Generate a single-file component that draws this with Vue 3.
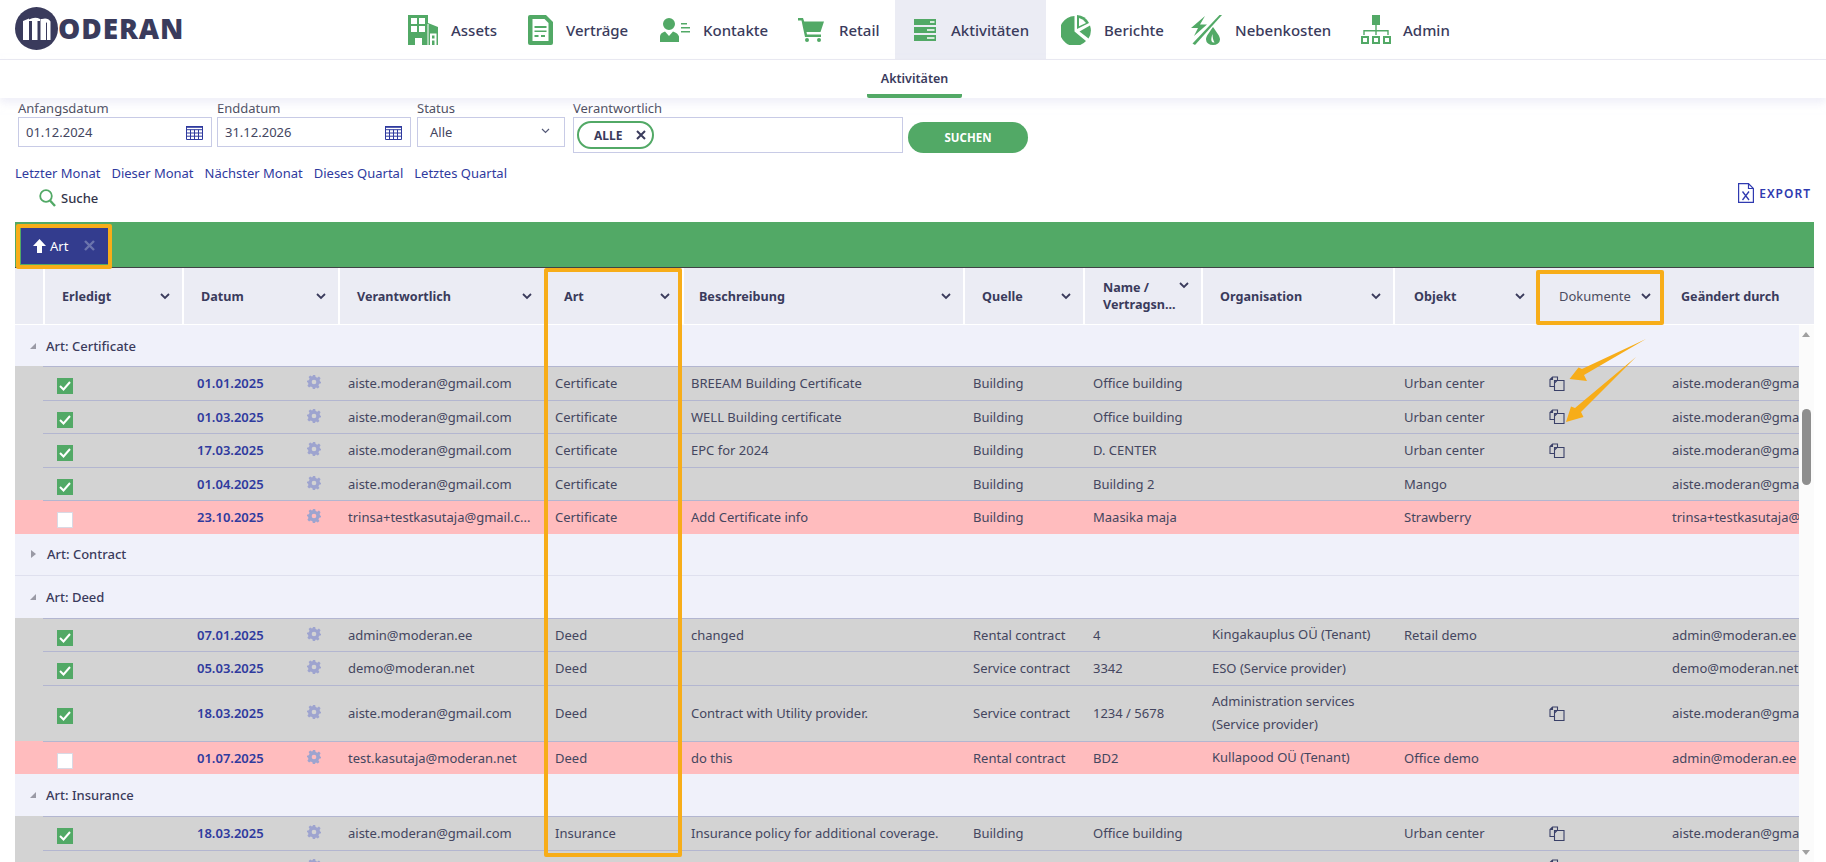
<script setup>
const g = '#52a966'
const w = '#ffffff'
const nav = [
  { label: 'Assets', vw: 30, vh: 30, shapes: [
    [g, 'M0 0H20V8L30 12V30H0Z'],
    [w, 'M3 3H9V9H3ZM11 3H17V9H11ZM3 11H9V17H3ZM11 11H17V17H11ZM7 23H14V30H7ZM19.5 9H20.5V30H19.5Z'],
    [w, 'M22 30V18.5H28.5V30H26.5V25.5H24V30ZM24 20.5V23.5H26.5V20.5Z'] ] },
  { label: 'Verträge', vw: 25, vh: 30, shapes: [
    [g, 'M2 0H18L25 7V28A2 2 0 0 1 23 30H2A2 2 0 0 1 0 28V2A2 2 0 0 1 2 0Z'],
    [w, 'M4.5 4H16.5L20.5 8V26H4.5Z'],
    [g, 'M6.5 11H18.5V13H6.5ZM6.5 15.5H18.5V17H6.5ZM6.5 20H10.5V22H6.5ZM13 20H17V22H13Z'] ] },
  { label: 'Kontakte', vw: 30, vh: 24, shapes: [
    [g, 'M9 0A6 6 0 1 1 9 12A6 6 0 1 1 9 0ZM0 24V18.5Q0 15 5 13.5L9 18L13 13.5Q18 15 19 18.5V24Z'],
    [g, 'M21 5H27V6.6H21ZM21 9H30V10.6H21ZM21 13H30V14.6H21Z'] ] },
  { label: 'Retail', vw: 26, vh: 24, shapes: [
    [g, 'M0 0H5L6.2 3.5H26L22.5 14H8.5L9 16.5H23V19H7L3.5 2.5H0Z'],
    [g, 'M9 20A2 2 0 1 1 9 24A2 2 0 1 1 9 20ZM21 20A2 2 0 1 1 21 24A2 2 0 1 1 21 20Z'] ] },
  { label: 'Aktivitäten', active: true, vw: 22, vh: 22, shapes: [
    [g, 'M0 0H22V6H0ZM0 8H22V14H0ZM0 16H22V22H0Z'],
    [w, 'M16 2.2H20.5V3.8H16ZM13 10.2H20.5V11.8H13ZM13 18.2H20.5V19.8H13Z'] ] },
  { label: 'Berichte', vw: 30, vh: 30, shapes: [
    [g, 'M13.5 1V16.5L25 26A15 15 0 1 1 13.5 1Z'],
    [g, 'M16 0A15 15 0 0 1 28 8L16 14Z'],
    [w, 'M18 3A12 12 0 0 1 25 8L18 11.3Z'],
    [g, 'M29 10.5A15 15 0 0 1 27.5 23.5L18.5 16.5Z'] ] },
  { label: 'Nebenkosten', vw: 31, vh: 30, shapes: [
    [g, 'M1.5 28.5L28.5 0H31L4 30Z'],
    [g, 'M14 1L0 13H7L3 21L16 9.5H9Z'],
    [g, 'M22 12C26 18 29 21 29 24.5A7 5.5 0 0 1 15 24.5C15 21 18 18 22 12Z'],
    [w, 'M21.5 19C20.5 22 20 24 20.5 26Q21.5 28 23.5 27.5C22 25 21.5 22 21.5 19Z'] ] },
  { label: 'Admin', vw: 30, vh: 29, shapes: [
    [g, 'M11 0H19V10H11ZM14.3 10H15.7V15H27.7V20H26.3V16.5H15.7V20H14.3V16.5H3.7V20H2.3V15H14.3Z'],
    [g, 'M0 21H8V29H0ZM11 21H19V29H11ZM22 21H30V29H22Z'],
    [w, 'M2 23H6V27H2ZM13 23H17V27H13ZM24 23H28V27H24Z'] ] }
]

const links = ['Letzter Monat', 'Dieser Monat', 'Nächster Monat', 'Dieses Quartal', 'Letztes Quartal']

const heads = [
  { label: '', blank: true },
  { label: 'Erledigt' },
  { label: 'Datum' },
  { label: 'Verantwortlich' },
  { label: 'Art' },
  { label: 'Beschreibung' },
  { label: 'Quelle' },
  { label: 'Name / Vertragsn...', two: true },
  { label: 'Organisation' },
  { label: 'Objekt' },
  { label: 'Dokumente', plain: true },
  { label: 'Geändert durch', nochev: true }
]

const A = 'aiste.moderan@gmail.com'
const T = 'trinsa+testkasutaja@gmail.c...'
const rows = [
  { group: 'Art: Certificate', open: true, first: true },
  { done: 1, date: '01.01.2025', who: A, art: 'Certificate', desc: 'BREEAM Building Certificate', src: 'Building', name: 'Office building', org: '', obj: 'Urban center', doc: 1, by: A },
  { done: 1, date: '01.03.2025', who: A, art: 'Certificate', desc: 'WELL Building certificate', src: 'Building', name: 'Office building', org: '', obj: 'Urban center', doc: 1, by: A },
  { done: 1, date: '17.03.2025', who: A, art: 'Certificate', desc: 'EPC for 2024', src: 'Building', name: 'D. CENTER', org: '', obj: 'Urban center', doc: 1, by: A },
  { done: 1, date: '01.04.2025', who: A, art: 'Certificate', desc: '', src: 'Building', name: 'Building 2', org: '', obj: 'Mango', doc: 0, by: A },
  { done: 0, date: '23.10.2025', who: T, art: 'Certificate', desc: 'Add Certificate info', src: 'Building', name: 'Maasika maja', org: '', obj: 'Strawberry', doc: 0, by: 'trinsa+testkasutaja@gmail.com' },
  { group: 'Art: Contract', open: false },
  { group: 'Art: Deed', open: true },
  { done: 1, date: '07.01.2025', who: 'admin@moderan.ee', art: 'Deed', desc: 'changed', src: 'Rental contract', name: '4', org: 'Kingakauplus OÜ (Tenant)', obj: 'Retail demo', doc: 0, by: 'admin@moderan.ee' },
  { done: 1, date: '05.03.2025', who: 'demo@moderan.net', art: 'Deed', desc: '', src: 'Service contract', name: '3342', org: 'ESO (Service provider)', obj: '', doc: 0, by: 'demo@moderan.net' },
  { done: 1, tall: true, date: '18.03.2025', who: A, art: 'Deed', desc: 'Contract with Utility provider.', src: 'Service contract', name: '1234 / 5678', org: 'Administration services (Service provider)', obj: '', doc: 1, by: A },
  { done: 0, date: '01.07.2025', who: 'test.kasutaja@moderan.net', art: 'Deed', desc: 'do this', src: 'Rental contract', name: 'BD2', org: 'Kullapood OÜ (Tenant)', obj: 'Office demo', doc: 0, by: 'admin@moderan.ee' },
  { group: 'Art: Insurance', open: true },
  { done: 1, date: '18.03.2025', who: A, art: 'Insurance', desc: 'Insurance policy for additional coverage.', src: 'Building', name: 'Office building', org: '', obj: 'Urban center', doc: 1, by: A },
  { done: 1, date: '19.03.2025', who: A, art: 'Insurance', desc: 'Insurance 2024 fully', src: 'Building', name: 'D. CENTER', org: '', obj: 'Urban center', doc: 1, by: A }
]
</script>

<template>
  <div class="page">
    <header class="topbar">
      <div class="logo">
        <svg class="logo-mark" viewBox="0 0 43 43" width="43" height="43" aria-hidden="true">
          <circle cx="21.5" cy="21.5" r="21.5" fill="#3a3b5c" />
          <path d="M8 14L14 11.5V33H8Z M17 12H22.5V33H17Z M25.5 12H31V33H25.5Z M14 12.5Q20 9.5 25 12L25 14H14Z M27 12Q33 10.5 35.5 14.5V33H32V16Z" fill="#ffffff" />
        </svg>
        <span class="logo-text">ODERAN</span>
      </div>
      <nav class="nav">
        <a v-for="item in nav" :key="item.label" class="nav-item" :class="{ active: item.active }">
          <svg :width="item.vw" :height="item.vh" :viewBox="`0 0 ${item.vw} ${item.vh}`" aria-hidden="true">
            <path v-for="(s, i) in item.shapes" :key="i" :d="s[1]" :fill="s[0]" fill-rule="evenodd" />
          </svg>
          <span>{{ item.label }}</span>
        </a>
      </nav>
    </header>

    <div class="subnav"><span class="subtab">Aktivitäten</span></div>

    <section class="filters">
      <label class="field f-date">
        <span class="lbl">Anfangsdatum</span>
        <span class="box">01.12.2024
          <svg class="cal" width="17" height="14" viewBox="0 0 17 14" aria-hidden="true"><path d="M.5.5H16.5V13.5H.5ZM.5 3.7H16.5M.5 7H16.5M.5 10.2H16.5M4.5 3.7V13.5M8.5 3.7V13.5M12.5 3.7V13.5" fill="none" stroke="#2f3a9e" /><path d="M0 0H17V1.8H0Z" fill="#2f3a9e" /></svg>
        </span>
      </label>
      <label class="field f-date">
        <span class="lbl">Enddatum</span>
        <span class="box">31.12.2026
          <svg class="cal" width="17" height="14" viewBox="0 0 17 14" aria-hidden="true"><path d="M.5.5H16.5V13.5H.5ZM.5 3.7H16.5M.5 7H16.5M.5 10.2H16.5M4.5 3.7V13.5M8.5 3.7V13.5M12.5 3.7V13.5" fill="none" stroke="#2f3a9e" /><path d="M0 0H17V1.8H0Z" fill="#2f3a9e" /></svg>
        </span>
      </label>
      <label class="field f-status">
        <span class="lbl">Status</span>
        <span class="box box-sel">Alle
          <svg class="sel-chev" width="9" height="6" viewBox="0 0 9 6" aria-hidden="true"><path d="M1 1L4.5 4.5L8 1" fill="none" stroke="#555a78" stroke-width="1.2" /></svg>
        </span>
      </label>
      <label class="field f-who">
        <span class="lbl">Verantwortlich</span>
        <span class="box box-who">
          <span class="chip">ALLE
            <svg width="10" height="10" viewBox="0 0 10 10" aria-hidden="true"><path d="M1 1L9 9M9 1L1 9" stroke="#3a3b5c" stroke-width="2" /></svg>
          </span>
        </span>
      </label>
      <button class="search-btn">SUCHEN</button>
    </section>

    <div class="quick">
      <a v-for="l in links" :key="l">{{ l }}</a>
    </div>

    <div class="tools">
      <span class="suche">
        <svg width="17" height="18" viewBox="0 0 17 18" aria-hidden="true"><circle cx="7" cy="7" r="5.8" fill="none" stroke="#52a966" stroke-width="1.8" /><path d="M11 11.5L16 17" stroke="#52a966" stroke-width="2.4" /></svg>
        Suche
      </span>
      <span class="export">
        <svg width="16" height="20" viewBox="0 0 16 20" aria-hidden="true"><path d="M.6.6H10.5L15.4 5.5V19.4H.6ZM10.5.6V5.5H15.4" fill="none" stroke="#2f3ab0" stroke-width="1.2" /><path d="M4.5 8.5L11 17M11 8.5L4.5 17" stroke="#2f3ab0" stroke-width="1.3" /></svg>
        EXPORT
      </span>
    </div>

    <section class="table">
      <div class="groupbar">
        <div class="group-chip">
          <svg width="13" height="14" viewBox="0 0 13 14" aria-hidden="true"><path d="M6.5 0L13 7H9V14H4V7H0Z" fill="#fff" /></svg>
          <span>Art</span>
          <svg class="chip-x" width="11" height="11" viewBox="0 0 11 11" aria-hidden="true"><path d="M1 1L10 10M10 1L1 10" stroke="#6b74ad" stroke-width="2.4" /></svg>
        </div>
      </div>

      <div class="thead">
        <div v-for="h in heads" :key="h.label" class="th" :class="{ blank: h.blank, plain: h.plain, two: h.two }">
          <span class="th-label">{{ h.label }}</span>
          <svg v-if="!h.blank && !h.nochev" class="chev" width="10" height="7" viewBox="0 0 10 7" aria-hidden="true"><path d="M1 1L5 5L9 1" fill="none" stroke="#3a3b5c" stroke-width="1.8" /></svg>
        </div>
      </div>

      <div class="tbody-wrap">
        <div class="tbody">
          <template v-for="(r, i) in rows" :key="i">
            <div v-if="r.group" class="group-row" :class="{ first: r.first, closed: !r.open }">
              <span class="tri" :class="r.open ? 'tri-open' : 'tri-closed'"></span>
              <span>{{ r.group }}</span>
            </div>
            <div v-else class="row" :class="{ late: !r.done, tall: r.tall }">
              <div class="td td-spacer"></div>
              <div class="td td-check">
                <span class="check" :class="{ on: r.done }">
                  <svg v-if="r.done" width="12" height="10" viewBox="0 0 12 10" aria-hidden="true"><path d="M1 5L4.5 8.5L11 1" fill="none" stroke="#fff" stroke-width="2" /></svg>
                </span>
              </div>
              <div class="td td-date">
                <span class="date">{{ r.date }}</span>
                <svg class="gear" width="14" height="14" viewBox="0 0 24 24" aria-hidden="true"><path d="M10 0H14L14.8 3.4L17.6 4.5L20.5 2.7L23.3 5.5L21.5 8.4L22.6 11.2L24 12V14L21 14.8L19.6 17.6L21.3 20.5L18.5 23.3L15.6 21.5L14 22.4V24H10L9.2 21L6.4 19.6L3.5 21.3L.7 18.5L2.5 15.6L1.4 12.8L0 12V10L3 9.2L4.4 6.4L2.7 3.5L5.5.7L8.4 2.5L10 1.6ZM12 8A4 4 0 1 0 12 16A4 4 0 1 0 12 8Z" fill="#9ea4cf" fill-rule="evenodd" /></svg>
              </div>
              <div class="td">{{ r.who }}</div>
              <div class="td">{{ r.art }}</div>
              <div class="td">{{ r.desc }}</div>
              <div class="td">{{ r.src }}</div>
              <div class="td">{{ r.name }}</div>
              <div class="td td-wrap">{{ r.org }}</div>
              <div class="td">{{ r.obj }}</div>
              <div class="td td-doc">
                <svg v-if="r.doc" width="16" height="15" viewBox="0 0 16 15" aria-hidden="true"><path d="M5.5 10.5H1V3.5L3.5 1H8.5V4M3.5 1V3.5H1" fill="none" stroke="#3a4068" stroke-width="1.1" /><path d="M5.5 4.5H15V14.5H5.5ZM5.5 7L8 4.5" fill="none" stroke="#3a4068" stroke-width="1.1" /></svg>
              </div>
              <div class="td td-clip">{{ r.by }}</div>
            </div>
          </template>
        </div>
        <div class="scrollbar">
          <span class="sb-up"></span>
          <span class="sb-thumb"></span>
          <span class="sb-down"></span>
        </div>
      </div>
    </section>

    <!-- annotation overlays -->
    <div class="mark mark-chip"></div>
    <div class="mark mark-art"></div>
    <div class="mark mark-doc"></div>
    <svg class="arrows" width="1826" height="862" viewBox="0 0 1826 862" aria-hidden="true">
      <path d="M1646 339L1582 369L1578.5 367.5L1569.5 379L1587 381L1584 375Z" fill="#f7ad19" />
      <path d="M1636 357L1575 408L1571 406.5L1566 422L1583.5 417L1581 412Z" fill="#f7ad19" />
    </svg>
  </div>
</template>

<style>
html, body { margin: 0; background: #fff; overflow: hidden; }
</style>

<style scoped>
.page {
  position: relative;
  width: 1826px;
  height: 862px;
  overflow: hidden;
  background: #fff;
  font-family: "Noto Sans", "Open Sans", sans-serif;
  font-size: 13px;
  color: #44465f;
}

/* top */
.topbar {
  display: flex;
  height: 59px;
  border-bottom: 1px solid #e9e9f2;
}
.logo {
  display: flex;
  align-items: center;
  width: 392px;
  padding: 0 0 3px 15px;
  box-sizing: border-box;
}
.logo-text {
  margin-left: 0;
  font-family: "Open Sans", sans-serif;
  font-size: 28px;
  font-weight: 800;
  color: #3a3b5c;
  letter-spacing: .9px;
}
.nav {
  display: grid;
  grid-template-columns: 120px 132px 138px 113px 151px 130px 170px 120px;
}
.nav-item {
  display: flex;
  align-items: center;
  gap: 13px;
  padding-left: 16px;
  font-size: 15px;
  font-weight: 500;
  color: #3a3b5c;
}
.nav-item:nth-child(4) { gap: 15px; }
.nav-item.active { background: #ebecf4; padding-left: 19px; gap: 15px; }
.nav-item:nth-child(6) { padding-left: 15px; }
.nav-item:nth-child(7) { padding-left: 15px; }
.nav-item:nth-child(8) { padding-left: 15px; gap: 12px; }

.subnav {
  display: flex;
  justify-content: flex-start;
  height: 38px;
  padding-left: 867px;
  box-shadow: 0 5px 8px rgba(225, 226, 242, .55);
  position: relative;
}
.subtab {
  width: 95px;
  height: 34px;
  line-height: 38px;
  text-align: center;
  font-size: 12.5px;
  font-weight: 600;
  color: #3a3b5c;
  border-bottom: 4px solid #52a966;
  border-radius: 0 0 2px 2px;
}

/* filters */
.filters {
  display: flex;
  align-items: flex-start;
  padding: 2px 0 0 18px;
  height: 53px;
}
.field { display: flex; flex-direction: column; margin-right: 7px; }
.f-date { width: 194px; margin-right: 5px; }
.f-date + .f-status { margin-left: 1px; }
.f-status { width: 148px; margin-right: 8px; }
.f-who { width: 330px; margin-right: 5px; }
.lbl { height: 17px; line-height: 17px; font-size: 13px; color: #4b4c60; }
.box {
  position: relative;
  display: flex;
  align-items: center;
  box-sizing: border-box;
  height: 30px;
  padding-left: 7px;
  border: 1px solid #c8cbe6;
  font-size: 13px;
  color: #44465f;
}
.cal { position: absolute; right: 8px; top: 8px; }
.box-sel { padding-left: 12px; }
.sel-chev { position: absolute; right: 14px; top: 10px; }
.box-who { height: 36px; padding-left: 3px; align-items: flex-start; }
.chip {
  display: flex;
  align-items: center;
  justify-content: space-between;
  box-sizing: border-box;
  width: 77px;
  height: 28px;
  margin-top: 3px;
  padding: 0 6px 0 15px;
  border: 2px solid #52a966;
  border-radius: 14px;
  font-size: 12px;
  font-weight: 700;
  color: #3a3b5c;
}
.search-btn {
  width: 120px;
  height: 31px;
  margin-top: 22px;
  border: 0;
  border-radius: 16px;
  background: #52a966;
  color: #fff;
  font-family: inherit;
  font-size: 11.5px;
  font-weight: 700;
}

.quick {
  display: flex;
  gap: 11px;
  height: 31px;
  padding: 11px 0 0 15px;
  box-sizing: border-box;
  line-height: 18px;
  font-size: 13px;
  color: #2f3a9e;
}

.tools {
  display: flex;
  justify-content: space-between;
  align-items: flex-start;
  height: 38px;
  padding: 0 15px 0 39px;
}
.suche {
  display: flex;
  align-items: center;
  gap: 5px;
  margin-top: 5px;
  font-size: 13px;
  font-weight: 500;
  color: #33344a;
}
.export {
  display: flex;
  align-items: center;
  gap: 5px;
  margin-top: -1px;
  font-size: 12px;
  font-weight: 600;
  letter-spacing: 1px;
  color: #2f3ab0;
}

/* table */
.table { margin: 0 12px 0 15px; }
.groupbar {
  position: relative;
  height: 46px;
  box-sizing: border-box;
  background: #52a966;
  border-bottom: 1px solid #3f4345;
}
.group-chip {
  position: absolute;
  left: 6px;
  top: 5px;
  display: flex;
  align-items: center;
  width: 87px;
  height: 37px;
  padding-left: 12px;
  box-sizing: border-box;
  background: #333c8e;
  color: #fff;
  font-size: 13px;
}
.group-chip span { margin-left: 4px; }
.chip-x { margin-left: 16px; }

.thead, .row {
  display: grid;
  grid-template-columns: 28px 139px 156px 206px 138px 281px 120px 118px 192px 144px 126px 151px;
}
.thead { height: 57px; background: #ebecf4; border-bottom: 1px solid #fff; box-sizing: border-box; }
.th {
  display: flex;
  align-items: center;
  justify-content: space-between;
  box-sizing: border-box;
  padding: 0 12px 0 17px;
  border-left: 2px solid #fff;
  font-size: 12.6px;
  font-weight: 700;
  color: #3a3b5c;
  line-height: 17px;
}
.th.blank { border-left: 0; }
.th:nth-child(5) { padding-left: 18px; }
.th:nth-child(6) { padding-left: 15px; }
.th:nth-child(8) { padding-left: 18px; }
.th:nth-child(10) { padding-left: 19px; }
.th.plain { font-weight: 400; border-left: 0; padding-left: 22px; font-size: 13px; color: #4b4c60; }
.th:last-child { border-left: 0; padding-left: 18px; white-space: nowrap; }
.th.two .chev { align-self: flex-start; margin-top: 14px; }
.chev { flex: none; }

.tbody-wrap {
  position: relative;
  display: flex;
  height: 537px;
  overflow: hidden;
}
.tbody { width: 1784px; overflow: hidden; background: #f0f1fa; }
.group-row {
  display: flex;
  align-items: center;
  height: 42px;
  box-sizing: border-box;
  padding-left: 15px;
  background: #f0f1fa;
  font-size: 13px;
  font-weight: 500;
  color: #3a3b5c;
}
.group-row.first { height: 41px; }
.group-row.closed { border-bottom: 1px solid #dfe0ee; }
.tri { width: 0; height: 0; margin-right: 10px; }
.tri-open {
  border-left: 6px solid transparent;
  border-bottom: 6px solid #9a9aa5;
}
.tri-closed {
  margin-left: 1px;
  margin-right: 11px;
  border-top: 4px solid transparent;
  border-bottom: 4px solid transparent;
  border-left: 5px solid #9a9aa5;
}

.row { height: 33.5px; background: #d3d3d3; width: 1799px; }
.row.tall { height: 56px; }
.row.late { background: #ffbcbe; }
.td {
  display: flex;
  align-items: center;
  box-sizing: border-box;
  min-width: 0;
  padding-left: 9px;
  border-top: 1px solid #b3b6d0;
  white-space: nowrap;
  font-size: 13px;
  color: #44465f;
}
.td:nth-child(4) { padding-left: 10px; }
.td:nth-child(5) { padding-left: 11px; }
.td:nth-child(7), .td:nth-child(8) { padding-left: 10px; }
.td:nth-child(9), .td:nth-child(10) { padding-left: 11px; }
.td-spacer { border-top: 0; }
.td-check { padding: 6px 0 0 14px; }
.check {
  display: flex;
  align-items: center;
  justify-content: center;
  box-sizing: border-box;
  width: 16px;
  height: 16px;
  background: #fff;
  border: 1px solid #d9d9e4;
}
.check.on { background: #52a966; border: 0; }
.td-date { justify-content: flex-start; padding-left: 15px; }
.date { width: 110px; font-weight: 600; color: #2f3a9e; }
.gear { margin-top: -2px; }
.td-wrap { white-space: normal; line-height: 23px; }
.td-doc { padding-left: 12px; }
.td-clip { overflow: hidden; }

.scrollbar {
  position: relative;
  flex: none;
  width: 15px;
  background: #fbfbfb;
}
.sb-up, .sb-down {
  position: absolute;
  left: 3px;
  width: 0;
  height: 0;
  border-left: 4.5px solid transparent;
  border-right: 4.5px solid transparent;
}
.sb-up { top: 7px; border-bottom: 5px solid #a0a0a0; }
.sb-down { top: 525px; border-top: 5px solid #a0a0a0; }
.sb-thumb {
  position: absolute;
  left: 3px;
  top: 84px;
  width: 9px;
  height: 76px;
  border-radius: 5px;
  background: #8e8e8e;
}

/* annotation overlays */
.mark {
  position: absolute;
  box-sizing: border-box;
  border: 4px solid #f7ad19;
  border-radius: 2px;
  pointer-events: none;
}
.mark-chip { left: 16px; top: 224px; width: 96px; height: 45px; }
.mark-art { left: 544px; top: 268px; width: 138px; height: 589px; }
.mark-doc { left: 1536px; top: 270px; width: 128px; height: 55px; }
.arrows { position: absolute; left: 0; top: 0; pointer-events: none; }
</style>
